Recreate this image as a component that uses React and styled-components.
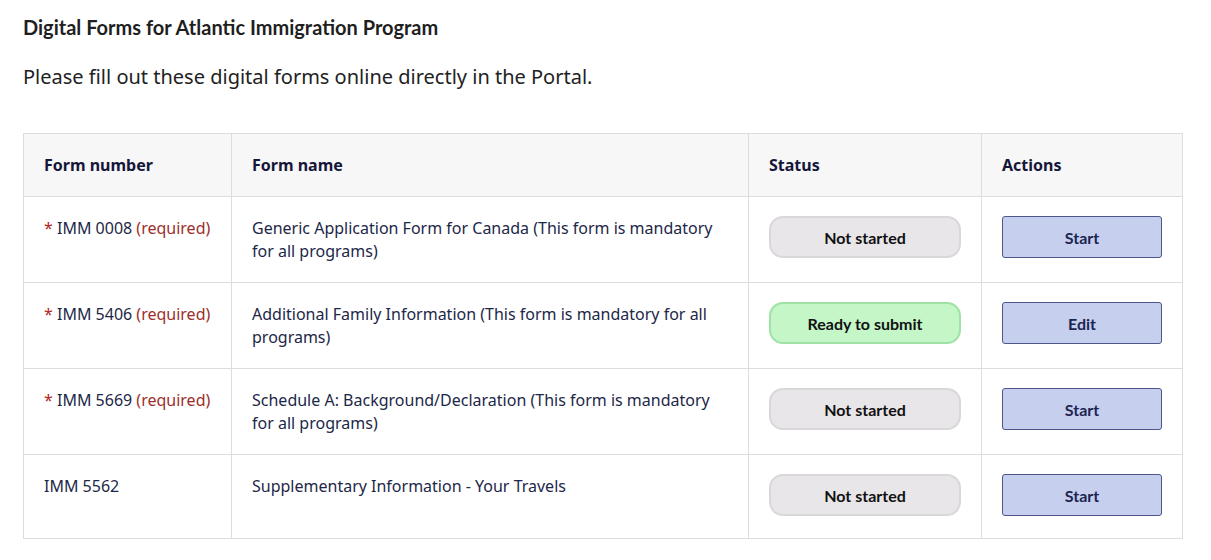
import React from 'react';
import styled, { createGlobalStyle } from 'styled-components';

const GlobalStyle = createGlobalStyle`
  body {
    margin: 0;
    background: #fff;
    font-family: "Noto Sans", "Open Sans", sans-serif;
  }
`

const Page = styled.div`
  padding: 15px 28px 20px 23px;
`

const Title = styled.h2`
  margin: 0;
  font-family: Lato, sans-serif;
  font-weight: 700;
  font-size: 20px;
  line-height: 24px;
  color: #1f1f1f;
`

const Intro = styled.p`
  margin: 24px 0 0;
  font-size: 20px;
  line-height: 27px;
  color: #222;
`

const Table = styled.table`
  margin-top: 43px;
  width: 1159px;
  border-collapse: collapse;
  table-layout: fixed;
`

const Th = styled.th`
  background: #f7f7f7;
  border: 1px solid #dddddd;
  padding: 20px 20px;
  text-align: left;
  font-size: 16px;
  line-height: 22px;
  font-weight: 700;
  color: #16163a;
`

const Td = styled.td`
  border: 1px solid #dddddd;
  padding: 20px 20px 19px;
  vertical-align: top;
  font-size: 16px;
  line-height: 23px;
  color: #1d2748;
`

const Star = styled.span`
  color: #b3261e;
`

const Required = styled.span`
  color: #9c2f2a;
`

const Pill = styled.div`
  box-sizing: border-box;
  height: 42px;
  margin: -1px 0 3px;
  border-radius: 14px;
  border: 2px solid ${p => (p.$ready ? '#9fe3a4' : '#d9d7da')};
  background: ${p => (p.$ready ? '#c5f6c8' : '#e8e6e9')};
  display: flex;
  align-items: center;
  justify-content: center;
  font-family: Lato, sans-serif;
  font-weight: 700;
  font-size: 16px;
  color: #111;
`

const Button = styled.button`
  box-sizing: border-box;
  display: block;
  width: 100%;
  height: 42px;
  margin: -1px 0 3px;
  border: 1px solid #4b5789;
  border-radius: 3px;
  background: #c6cfee;
  font-family: Lato, sans-serif;
  font-weight: 700;
  font-size: 16px;
  color: #1c2550;
  cursor: pointer;
`

const forms = [
  { num: 'IMM 0008', required: true, name: 'Generic Application Form for Canada (This form is mandatory for all programs)', status: 'Not started', action: 'Start' },
  { num: 'IMM 5406', required: true, name: 'Additional Family Information (This form is mandatory for all programs)', status: 'Ready to submit', action: 'Edit' },
  { num: 'IMM 5669', required: true, name: 'Schedule A: Background/Declaration (This form is mandatory for all programs)', status: 'Not started', action: 'Start' },
  { num: 'IMM 5562', required: false, name: 'Supplementary Information - Your Travels', status: 'Not started', action: 'Start' },
];

const App = () => {
  return (
    <Page>
      <GlobalStyle />
      <Title>Digital Forms for Atlantic Immigration Program</Title>
      <Intro>Please fill out these digital forms online directly in the Portal.</Intro>
      <Table>
        <colgroup>
          <col style={{ width: 208 }} />
          <col style={{ width: 517 }} />
          <col style={{ width: 233 }} />
          <col style={{ width: 201 }} />
        </colgroup>
        <thead>
          <tr>
            <Th>Form number</Th>
            <Th>Form name</Th>
            <Th>Status</Th>
            <Th>Actions</Th>
          </tr>
        </thead>
        <tbody>
          {forms.map(f => (
            <tr key={f.num}>
              <Td>
                {f.required && <Star>* </Star>}
                {f.num}
                {f.required && <Required> (required)</Required>}
              </Td>
              <Td>{f.name}</Td>
              <Td>
                <Pill $ready={f.status === 'Ready to submit'}>{f.status}</Pill>
              </Td>
              <Td>
                <Button>{f.action}</Button>
              </Td>
            </tr>
          ))}
        </tbody>
      </Table>
    </Page>
  );
}

export default App;
